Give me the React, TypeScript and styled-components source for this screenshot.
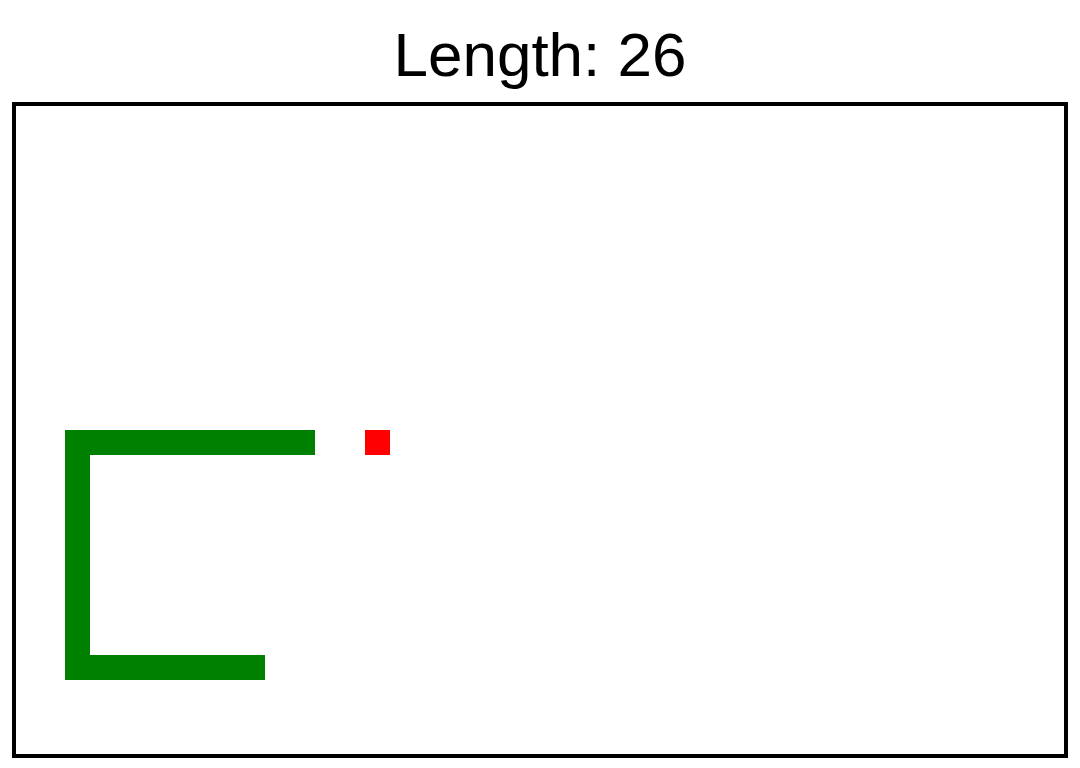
import styled, { createGlobalStyle } from 'styled-components';

const CELL = 25;

const GlobalStyle = createGlobalStyle`
  html, body {
    margin: 0;
    padding: 0;
    background: #ffffff;
  }
`;

const Page = styled.div`
  width: 1080px;
  display: flex;
  flex-direction: column;
  align-items: center;
`;

const Score = styled.h1`
  margin: 0;
  padding-top: 20px;
  font-family: 'Comic Sans MS', 'Liberation Sans', sans-serif;
  font-weight: 400;
  font-size: 62px;
  line-height: 70px;
  color: #000;
`;

const Board = styled.div`
  position: relative;
  box-sizing: border-box;
  margin-top: 12px;
  width: 1056px;
  height: 656px;
  border: 4px solid #000;
  background: #fff;
  overflow: hidden;
`;

const Cell = styled.div<{ $col: number; $row: number; $food?: boolean }>`
  position: absolute;
  left: ${(p) => p.$col * CELL - 1}px;
  top: ${(p) => p.$row * CELL - 1}px;
  width: ${CELL}px;
  height: ${CELL}px;
  background: ${(p) => (p.$food ? '#ff0000' : '#008000')};
`;

// head first: along the top, down the left side, then along the bottom
const buildSnake = () => {
  const cells: [number, number][] = [];
  for (let c = 11; c >= 2; c--) cells.push([c, 13]);
  for (let r = 14; r <= 22; r++) cells.push([2, r]);
  for (let c = 3; c <= 9; c++) cells.push([c, 22]);
  return cells;
};

const snake = buildSnake();
const food: [number, number] = [14, 13];

export default function App() {
  return (
    <>
      <GlobalStyle />
      <Page>
        <Score>Length: {snake.length}</Score>
        <Board>
          {snake.map(([c, r]) => (
            <Cell key={`${c}-${r}`} $col={c} $row={r} />
          ))}
          <Cell $col={food[0]} $row={food[1]} $food />
        </Board>
      </Page>
    </>
  );
}
